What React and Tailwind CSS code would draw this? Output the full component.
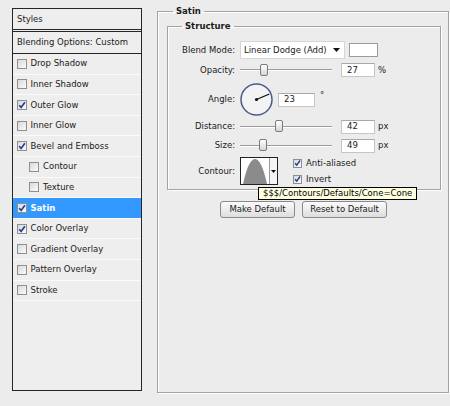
import React from 'react';

const effects = [
    { label: 'Drop Shadow', checked: false },
    { label: 'Inner Shadow', checked: false },
    { label: 'Outer Glow', checked: true },
    { label: 'Inner Glow', checked: false },
    { label: 'Bevel and Emboss', checked: true },
    { label: 'Contour', checked: false, indent: true },
    { label: 'Texture', checked: false, indent: true },
    { label: 'Satin', checked: true, active: true },
    { label: 'Color Overlay', checked: true },
    { label: 'Gradient Overlay', checked: false },
    { label: 'Pattern Overlay', checked: false },
    { label: 'Stroke', checked: false },
];

function CheckBox({ checked, size = 'w-[10px] h-[10px]' }) {
    return (
        <span className={`${size} shrink-0 border border-[#8e8f8f] bg-linear-to-br from-[#d9d9d9] to-[#fbfbfb] flex items-center justify-center`}>
            {checked && (
                <svg width="8" height="8" viewBox="0 0 8 8">
                    <path d="M1.2 4.2 L3.1 6.4 L6.9 1.2" fill="none" stroke="#25408c" strokeWidth="1.7" />
                </svg>
            )}
        </span>
    );
}

function Slider({ pos }) {
    return (
        <div className="relative ml-[3px] w-[92px] h-[13px] flex items-center">
            <div className="w-full h-[2px] border-t border-[#9c9c9c] border-b border-b-white" />
            <div
                className="absolute top-0 w-[8px] h-[12px] rounded-[2px] border border-[#7b7b7b] bg-linear-to-b from-white to-[#d6d6d6]"
                style={{ left: pos - 4 }}
            />
        </div>
    );
}

function Field({ value, width = 'w-[34px]' }) {
    return (
        <div className={`${width} h-[14px] bg-white border border-[#c6c6c6] border-t-[#a9a9a9] pl-[5px] flex items-center leading-none`}>
            {value}
        </div>
    );
}

function Label({ children }) {
    return <div className="w-[68px] text-right pr-[1px] shrink-0">{children}</div>;
}

function Button({ children, width }) {
    return (
        <button
            type="button"
            className={`${width} h-[17px] rounded-[3px] border border-[#8a8a8a] bg-linear-to-b from-[#fbfbfb] to-[#dedede] text-[8.5px] text-[#1a1a1a] leading-none`}
        >
            {children}
        </button>
    );
}

export default function App() {
    return (
        <div className="w-[450px] h-[406px] bg-[#ececec] flex items-start font-['DejaVu_Sans',sans-serif] text-[8.5px] text-[#1a1a1a] overflow-hidden">
            {/* styles list */}
            <div className="ml-[12px] mt-[8px] w-[130px] h-[383px] border-[1.5px] border-[#262626] bg-[#eeeeee] flex flex-col">
                <div className="h-[23px] shrink-0 pl-[4px] flex items-center border-b-[3px] border-double border-[#262626]">
                    Styles
                </div>
                <div className="h-[22px] shrink-0 pl-[4px] flex items-center border-b border-[#262626]">
                    Blending Options: Custom
                </div>
                {effects.map((e) => (
                    <div
                        key={e.label}
                        className={`h-[20.6px] shrink-0 flex items-center border-b border-[#fbfbfb] ${e.indent ? 'pl-[16px]' : 'pl-[3.5px]'} ${e.active ? 'bg-[#3399ff] text-white font-bold' : ''}`}
                    >
                        <CheckBox checked={e.checked} />
                        <span className="ml-[4px]">{e.label}</span>
                    </div>
                ))}
            </div>

            {/* satin panel */}
            <fieldset className="ml-[15px] mt-[5px] w-[292px] h-[388px] border border-[#a3a3a3] shadow-[inset_1px_1px_0_#fff,1px_1px_0_#fff]">
                <legend className="ml-[15px] px-[3px] font-bold leading-[13px]">Satin</legend>

                <fieldset className="ml-[9px] mt-[2px] w-[274px] border border-[#a3a3a3] shadow-[inset_1px_1px_0_#fff,1px_1px_0_#fff] pb-[4px]">
                    <legend className="ml-[14px] px-[3px] font-bold leading-[13px]">Structure</legend>

                    <div className="mt-[8px] h-[18px] flex items-center">
                        <Label>Blend Mode:</Label>
                        <div className="ml-[4px] w-[105px] h-[18px] bg-white border border-[#d6d6d6] flex items-center justify-between pl-[3px] pr-[4px]">
                            <span>Linear Dodge (Add)</span>
                            <svg width="7" height="4" viewBox="0 0 7 4">
                                <path d="M0 0 H7 L3.5 4 Z" fill="#111" />
                            </svg>
                        </div>
                        <div className="ml-[4px] w-[29px] h-[14px] bg-white border border-[#9a9a9a]" />
                    </div>

                    <div className="mt-[4px] h-[14px] flex items-center">
                        <Label>Opacity:</Label>
                        <div className="ml-[1px]">
                            <Slider pos={24} />
                        </div>
                        <div className="ml-[9px]">
                            <Field value="27" />
                        </div>
                        <span className="ml-[3px]">%</span>
                    </div>

                    <div className="mt-[6px] h-[33px] flex items-center">
                        <Label>Angle:</Label>
                        <svg className="ml-[4px]" width="33" height="33" viewBox="0 0 33 33">
                            <circle cx="16.5" cy="16.5" r="15.5" fill="#f3f3f3" stroke="#4b5b8a" strokeWidth="1.5" />
                            <line x1="16.5" y1="16.5" x2="29.4" y2="11" stroke="#111" strokeWidth="1.3" />
                            <circle cx="16.5" cy="16.5" r="1.6" fill="#111" />
                        </svg>
                        <div className="ml-[5px]">
                            <Field value="23" width="w-[37px]" />
                        </div>
                        <span className="ml-[5px] -mt-[8px]">°</span>
                    </div>

                    <div className="mt-[4px] h-[13px] flex items-center">
                        <Label>Distance:</Label>
                        <div className="ml-[1px]">
                            <Slider pos={39} />
                        </div>
                        <div className="ml-[9px]">
                            <Field value="42" />
                        </div>
                        <span className="ml-[3px]">px</span>
                    </div>

                    <div className="mt-[6px] h-[13px] flex items-center">
                        <Label>Size:</Label>
                        <div className="ml-[1px]">
                            <Slider pos={23} />
                        </div>
                        <div className="ml-[9px]">
                            <Field value="49" />
                        </div>
                        <span className="ml-[3px]">px</span>
                    </div>

                    <div className="relative mt-[5px] h-[28px] flex items-start">
                        <div className="h-[28px] flex items-center">
                            <Label>Contour:</Label>
                        </div>
                        <div className="ml-[4px] w-[38px] h-[28px] border border-[#222] bg-white flex">
                            <svg width="28" height="26" viewBox="0 0 28 26">
                                <path d="M2 26 C5 12 9 1 14 1 C19 1 23 12 26 26 Z" fill="#8b8b8b" />
                            </svg>
                            <div className="flex-1 border-l border-[#9a9a9a] bg-[#f4f4f4] flex items-center justify-center">
                                <svg width="5" height="3" viewBox="0 0 5 3">
                                    <path d="M0 0 H5 L2.5 3 Z" fill="#111" />
                                </svg>
                            </div>
                        </div>
                        <div className="ml-[15px] mt-[1px] flex flex-col gap-[6px]">
                            <div className="flex items-center h-[10px]">
                                <CheckBox checked size="w-[9px] h-[9px]" />
                                <span className="ml-[4px]">Anti-aliased</span>
                            </div>
                            <div className="flex items-center h-[10px]">
                                <CheckBox checked size="w-[9px] h-[9px]" />
                                <span className="ml-[4px]">Invert</span>
                            </div>
                        </div>

                        <div className="absolute left-[90px] top-[30px] h-[13px] px-[4px] bg-[#ffffe1] border border-black flex items-center whitespace-nowrap leading-none text-black">
                            $$$/Contours/Defaults/Cone=Cone
                        </div>
                    </div>
                </fieldset>

                <div className="mt-[11px] ml-[62px] flex gap-[7px]">
                    <Button width="w-[75px]">Make Default</Button>
                    <Button width="w-[85px]">Reset to Default</Button>
                </div>
            </fieldset>
        </div>
    );
}
